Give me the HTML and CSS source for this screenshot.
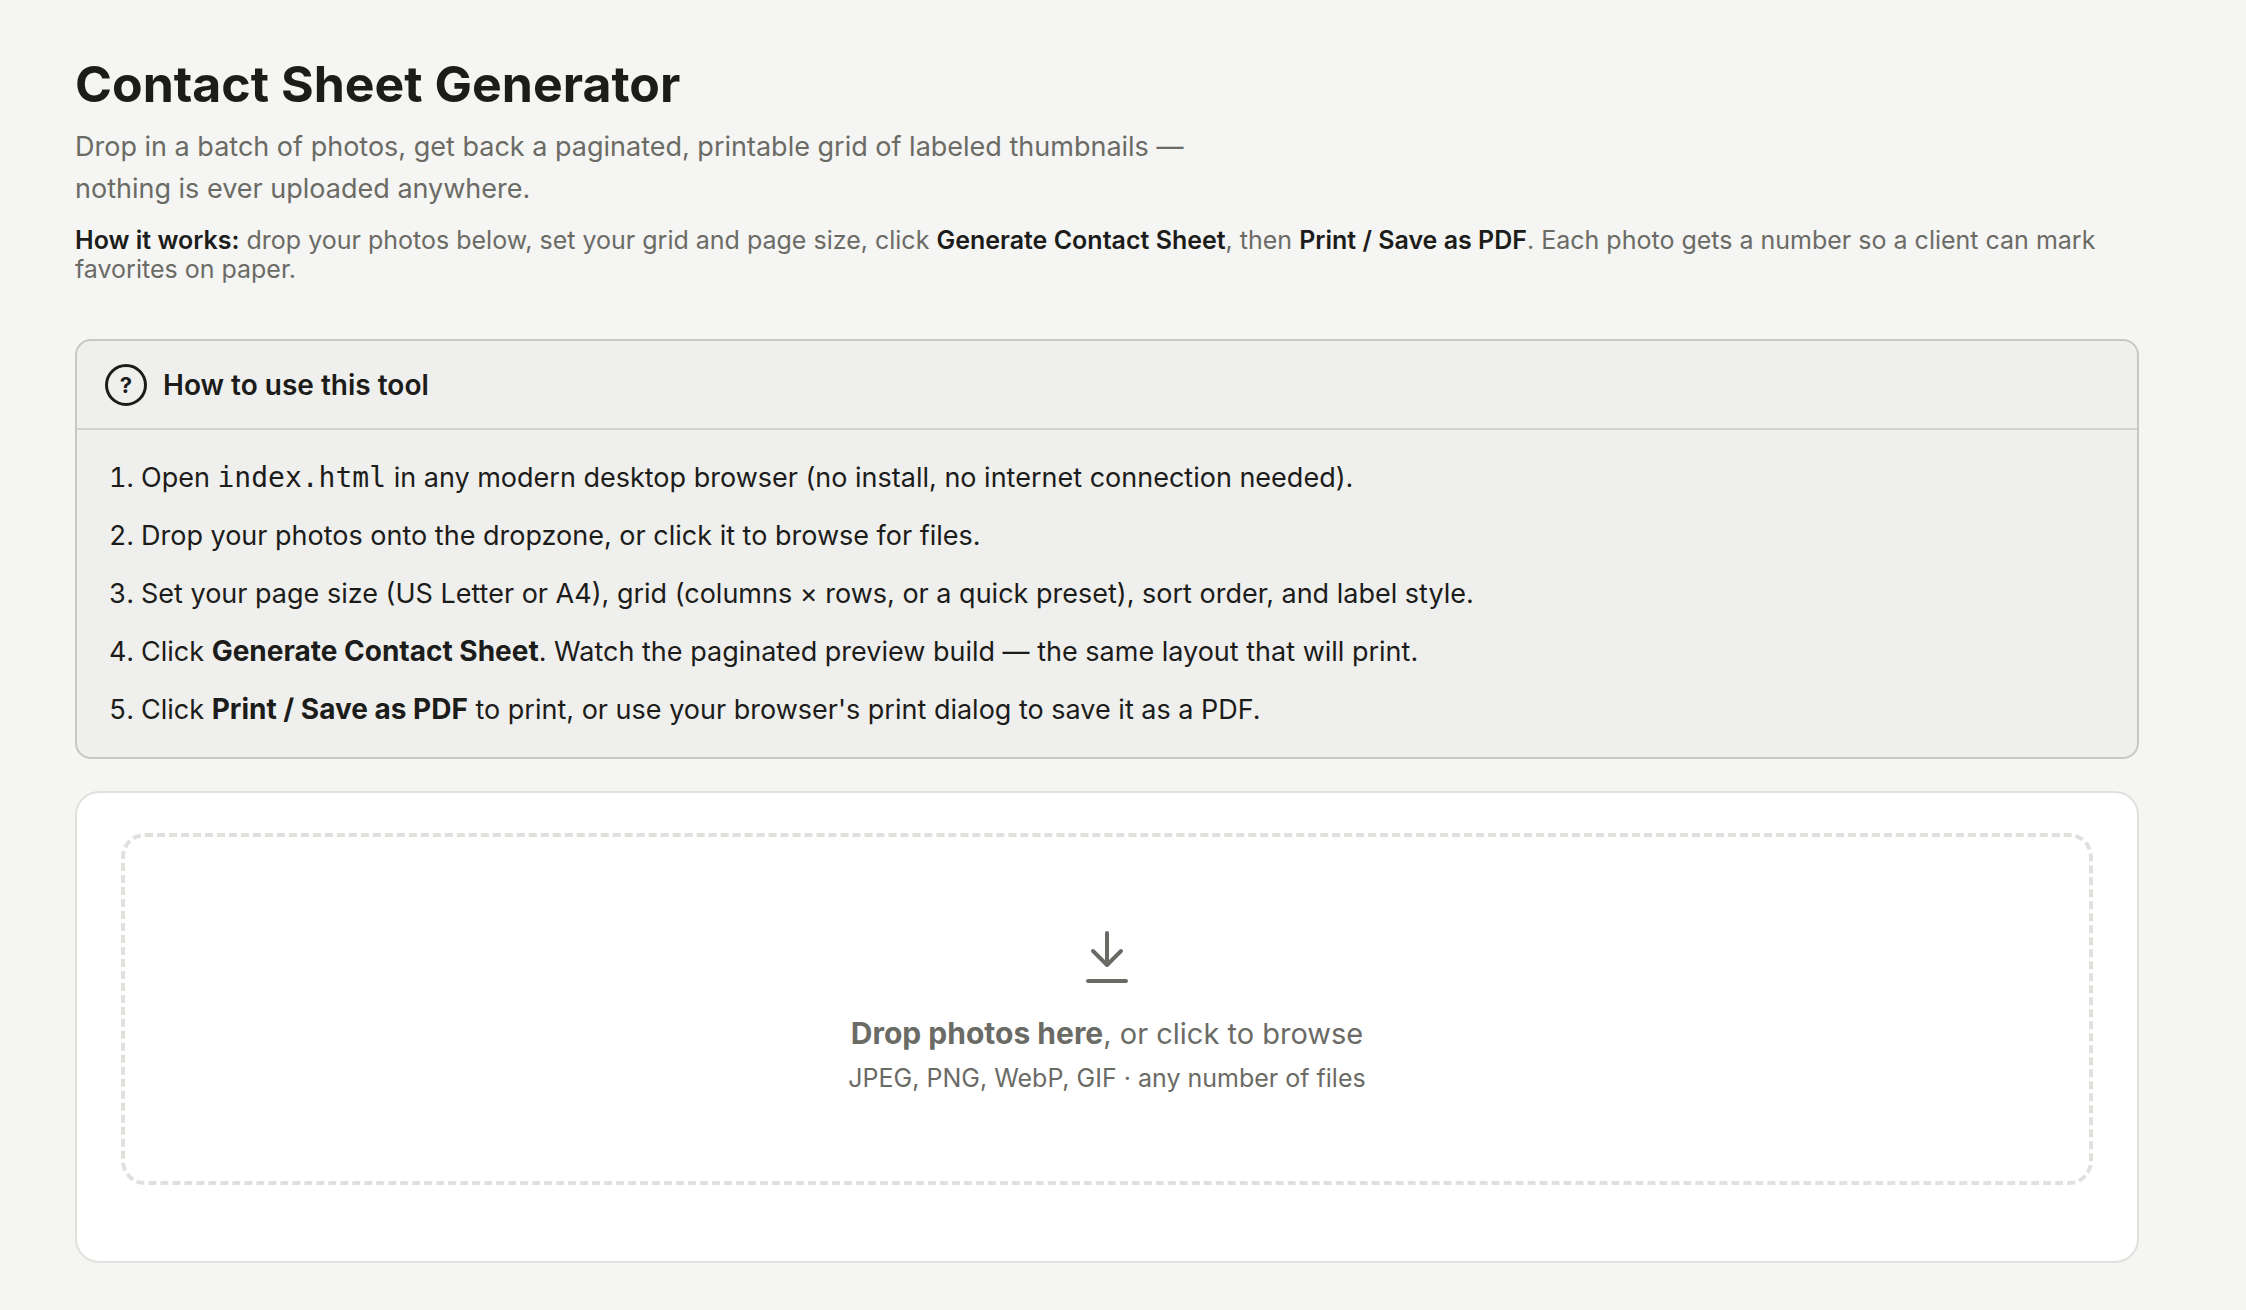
FILE: index.html
```html
<!DOCTYPE html>
<html lang="en">
<head>
    <meta charset="UTF-8">
    <meta name="viewport" content="width=device-width, initial-scale=1.0">
    <title>Contact Sheet Generator</title>
    <link rel="stylesheet" href="styles.css">
</head>
<body>
    <header class="page-header">
        <h1>Contact Sheet Generator</h1>
        <p class="tagline">Drop in a batch of photos, get back a paginated, printable grid of labeled thumbnails — nothing is ever uploaded anywhere.</p>
        <p class="how-it-works"><strong>How it works:</strong> drop your photos below, set your grid and page size, click <strong>Generate Contact Sheet</strong>, then <strong>Print / Save as PDF</strong>. Each photo gets a number so a client can mark favorites on paper.</p>
    </header>

    <main>
        <details class="help" open>
            <summary class="help-title">
                <span class="help-icon">?</span>
                How to use this tool
            </summary>
            <ol class="help-steps">
                <li>Open <code>index.html</code> in any modern desktop browser (no install, no internet connection needed).</li>
                <li>Drop your photos onto the dropzone, or click it to browse for files.</li>
                <li>Set your page size (US Letter or A4), grid (columns × rows, or a quick preset), sort order, and label style.</li>
                <li>Click <strong>Generate Contact Sheet</strong>. Watch the paginated preview build — the same layout that will print.</li>
                <li>Click <strong>Print / Save as PDF</strong> to print, or use your browser's print dialog to save it as a PDF.</li>
            </ol>
        </details>

        <section class="card">
            <input type="file" id="fileInput" class="file-input" accept="image/*" multiple>
            <label class="dropzone" for="fileInput">
                <svg class="dropzone-icon" viewBox="0 0 56 56" fill="none" stroke="currentColor" stroke-width="4" stroke-linecap="round" stroke-linejoin="round">
                    <path d="M28 4v32M14 22l14 14 14-14M9 52h38"/>
                </svg>
                <span class="dropzone-text"><strong>Drop photos here</strong>, or click to browse</span>
                <span class="dropzone-hint">JPEG, PNG, WebP, GIF · any number of files</span>
            </label>
        </section>
    </main>
</body>
</html>
```

FILE: styles.css
```css
* {
    box-sizing: border-box;
}
body {
    margin: 0;
    padding: 52px 107px 48px 75px;
    background: #f5f5f3;
    color: #1c1c1a;
    font-family: Inter, "Liberation Sans", sans-serif;
    font-size: 27px;
    line-height: 42px;
}
h1 {
    margin: 0 0 10px;
    font-size: 50px;
    line-height: 64px;
    font-weight: 700;
}
.tagline {
    margin: 0;
    max-width: 1180px;
    color: #6b6b66;
}
.how-it-works {
    margin: 16px 0 0;
    font-size: 25px;
    line-height: 29px;
    color: #6b6b66;
}
.how-it-works strong {
    color: #1c1c1a;
    font-weight: 600;
}

/* Help panel */
.help {
    margin-top: 55px;
    background: #efefed;
    border: 2px solid #c7c7c5;
    border-radius: 16px;
}
.help-title {
    display: flex;
    align-items: center;
    gap: 16px;
    padding: 23px 28px 22px;
    font-size: 28px;
    font-weight: 600;
    list-style: none;
    cursor: pointer;
}
.help-icon {
    display: flex;
    align-items: center;
    justify-content: center;
    width: 42px;
    height: 42px;
    border: 3px solid #1c1c1a;
    border-radius: 50%;
    font-size: 22px;
    font-weight: 700;
}
.help-steps {
    margin: 0;
    padding: 27px 32px 26px 64px;
    border-top: 2px solid #d3d3d0;
}
.help-steps li + li {
    margin-top: 16px;
}
.help-steps strong {
    font-size: 28px;
    line-height: 1;
}
.help-steps code {
    font-family: "DejaVu Sans Mono", monospace;
    font-size: 28px;
    line-height: 1;
}

/* Dropzone */
.card {
    margin-top: 32px;
    padding: 40px 44px 76px;
    background: #fff;
    border: 2px solid #e0e0dc;
    border-radius: 24px;
}
.file-input {
    position: absolute;
    width: 1px;
    height: 1px;
    opacity: 0;
}
.dropzone {
    display: flex;
    flex-direction: column;
    align-items: center;
    padding: 92px 32px 82px;
    border: 4px dashed #e0e0dc;
    border-radius: 24px;
    color: #6b6b66;
    cursor: pointer;
}
.dropzone:hover {
    border-color: #6b6b66;
}
.dropzone-icon {
    width: 56px;
    height: 56px;
    margin-bottom: 28px;
}
.dropzone-text {
    font-size: 29px;
}
.dropzone-text strong {
    font-size: 30px;
    line-height: 1;
}
.dropzone-hint {
    margin-top: 2px;
    font-size: 25px;
}
```
